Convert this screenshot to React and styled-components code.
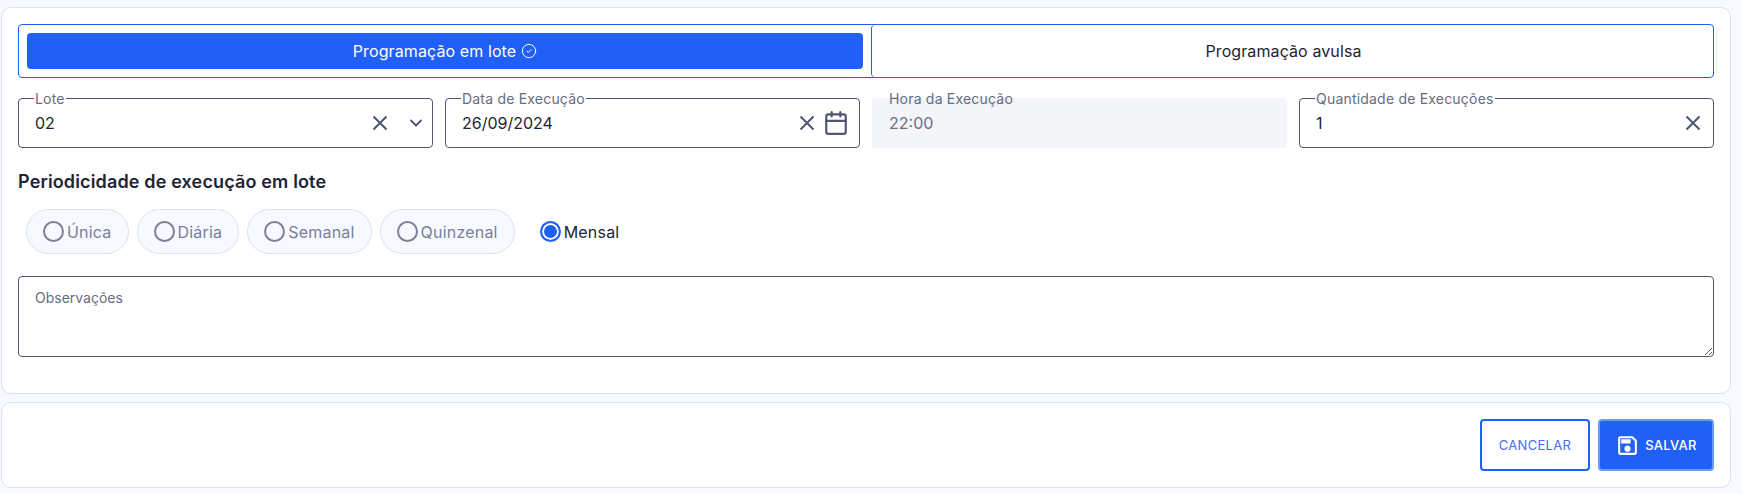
import React from 'react';
import styled, { createGlobalStyle } from 'styled-components';
import { ChevronDown, Calendar, CircleCheck } from 'lucide-react';
import { MdOutlineSave } from 'react-icons/md';

const GlobalStyle = createGlobalStyle`
  body {
    margin: 0;
    background: #f6f9ff;
    font-family: "Inter", "Noto Sans", sans-serif;
    color: #1d2433;
  }
`;

const Page = styled.div`
  display: flex;
  flex-direction: column;
  gap: 8px;
  padding: 7px 11px 0 1px;
`;

const Panel = styled.section`
  background: #fff;
  border: 1px solid #dbe1f3;
  border-radius: 10px;
  padding: ${(p) => p.$padding};
  height: ${(p) => p.$height};
  box-sizing: border-box;
`;

const Tabs = styled.div`
  display: grid;
  grid-template-columns: 852px 1fr;
  height: 54px;
  box-sizing: border-box;
  border: 1px solid #2160f6;
  border-radius: 4px;
`;

const Tab = styled.div`
  display: flex;
  align-items: center;
  justify-content: center;
  gap: 5px;
  margin: ${(p) => (p.$active ? '8px' : '0')};
  padding-right: ${(p) => (p.$last ? '18px' : '0')};
  border-radius: 4px;
  border-left: ${(p) => (p.$last ? '1px solid #2160f6' : 'none')};
  background: ${(p) => (p.$active ? '#2160f6' : 'transparent')};
  color: ${(p) => (p.$active ? '#fff' : '#1d2433')};
  font-size: 16px;
  letter-spacing: 0.1px;
`;

const FieldRow = styled.div`
  display: grid;
  grid-template-columns: repeat(4, 1fr);
  gap: 12px;
  margin-top: 20px;
`;

const Field = styled.div`
  position: relative;
  display: flex;
  align-items: center;
  height: 50px;
  box-sizing: border-box;
  padding: 0 12px 0 16px;
  border-radius: 4px;
  border: 1px solid ${(p) => (p.$disabled ? '#f3f5f9' : '#4f5672')};
  background: ${(p) => (p.$disabled ? '#f3f5f9' : '#fff')};
  color: ${(p) => (p.$disabled ? '#6a7086' : '#1d2433')};
  font-size: 16px;
`;

const FieldLabel = styled.span`
  position: absolute;
  left: 15px;
  top: -7px;
  padding: 0 1px;
  line-height: 14px;
  font-size: 14px;
  letter-spacing: 0.2px;
  color: #666c82;
  background: ${(p) => (p.$disabled ? 'transparent' : '#fff')};
`;

const FieldValue = styled.span`
  flex: 1;
`;

const ClearSvg = styled.svg`
  width: 16px;
  height: 16px;
  flex: none;
  fill: none;
  stroke: #4f5672;
  stroke-width: 2;
`;

const Caret = styled(ChevronDown)`
  width: 20px;
  height: 20px;
  margin: 0 -6px 0 18px;
  color: #4f5672;
  stroke-width: 2.2;
`;

const CalendarIcon = styled(Calendar)`
  width: 26px;
  height: 26px;
  margin: 0 -2px 0 8px;
  color: #4f5672;
  stroke-width: 2;
`;

const SectionTitle = styled.h2`
  margin: 24px 0 0;
  font-size: 18px;
  line-height: 20px;
  font-weight: 600;
  letter-spacing: 0.15px;
  color: #1d2433;
`;

const RadioRow = styled.div`
  display: flex;
  gap: 8px;
  margin: 17px 0 0 8px;
`;

const RadioPill = styled.label`
  display: flex;
  align-items: center;
  gap: 3px;
  height: 45px;
  box-sizing: border-box;
  padding: 0 16px;
  border-radius: 23px;
  border: 1px solid ${(p) => (p.$checked ? 'transparent' : '#dbe1f3')};
  background: ${(p) => (p.$checked ? 'transparent' : '#f6f9ff')};
  color: ${(p) => (p.$checked ? '#1d2433' : '#7b8096')};
  font-size: 16px;
  letter-spacing: 0.2px;
`;

const RadioMark = styled.span`
  width: 21px;
  height: 21px;
  box-sizing: border-box;
  border-radius: 50%;
  border: 2px solid ${(p) => (p.$checked ? '#2160f6' : '#7b8096')};
  background: ${(p) => (p.$checked ? '#2160f6' : 'transparent')};
  box-shadow: ${(p) => (p.$checked ? 'inset 0 0 0 2px #fff' : 'none')};
`;

const Notes = styled.textarea`
  display: block;
  width: 100%;
  height: 81px;
  margin-top: 22px;
  box-sizing: border-box;
  padding: 12px 16px;
  border: 1px solid #4f5672;
  border-radius: 4px;
  font-family: inherit;
  font-size: 14px;
  outline: none;
  &::placeholder {
    color: #666c82;
    opacity: 1;
  }
`;

const Actions = styled.div`
  display: flex;
  justify-content: flex-end;
  gap: 8px;
`;

const Button = styled.button`
  display: flex;
  align-items: center;
  justify-content: center;
  gap: 5px;
  height: 52px;
  box-sizing: border-box;
  width: ${(p) => p.$width};
  border-radius: 4px;
  border: 2px solid ${(p) => (p.$primary ? '#6d9bf9' : '#2160f6')};
  background: ${(p) => (p.$primary ? '#2160f6' : '#fff')};
  color: ${(p) => (p.$primary ? '#fff' : '#4a6cf7')};
  font-family: inherit;
  font-size: 13px;
  letter-spacing: 0.3px;
  font-weight: ${(p) => (p.$primary ? 500 : 400)};
`;

const ClearIcon = () => (
  <ClearSvg viewBox="0 0 16 16">
    <path d="M1.5 1.5l13 13M14.5 1.5l-13 13" />
  </ClearSvg>
);

const periods = ['Única', 'Diária', 'Semanal', 'Quinzenal', 'Mensal'];

export default function App() {
  return (
    <Page>
      <GlobalStyle />
      <Panel $padding="16px 16px 0" $height="387px">
        <Tabs>
          <Tab $active>
            Programação em lote <CircleCheck size={16} strokeWidth={1.5} />
          </Tab>
          <Tab $last>Programação avulsa</Tab>
        </Tabs>
        <FieldRow>
          <Field>
            <FieldLabel>Lote</FieldLabel>
            <FieldValue>02</FieldValue>
            <ClearIcon />
            <Caret />
          </Field>
          <Field>
            <FieldLabel>Data de Execução</FieldLabel>
            <FieldValue>26/09/2024</FieldValue>
            <ClearIcon />
            <CalendarIcon />
          </Field>
          <Field $disabled>
            <FieldLabel $disabled>Hora da Execução</FieldLabel>
            <FieldValue>22:00</FieldValue>
          </Field>
          <Field>
            <FieldLabel>Quantidade de Execuções</FieldLabel>
            <FieldValue>1</FieldValue>
            <ClearIcon />
          </Field>
        </FieldRow>
        <SectionTitle>Periodicidade de execução em lote</SectionTitle>
        <RadioRow>
          {periods.map((name) => (
            <RadioPill key={name} $checked={name === 'Mensal'}>
              <RadioMark $checked={name === 'Mensal'} />
              {name}
            </RadioPill>
          ))}
        </RadioRow>
        <Notes placeholder="Observações" />
      </Panel>
      <Panel $padding="16px" $height="86px">
        <Actions>
          <Button $width="110px">CANCELAR</Button>
          <Button $primary $width="116px">
            <MdOutlineSave size={25} /> SALVAR
          </Button>
        </Actions>
      </Panel>
    </Page>
  );
}
